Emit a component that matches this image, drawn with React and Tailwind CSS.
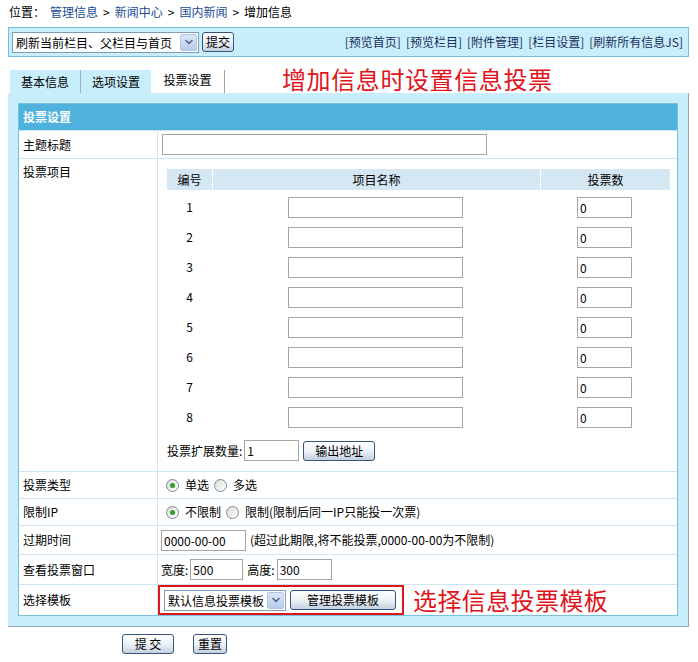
import { ChevronDown } from "lucide-react";

const FONT = { fontFamily: '"Noto Sans CJK SC", "Noto Sans", sans-serif' };

const ITEMS = [1, 2, 3, 4, 5, 6, 7, 8];

function TextBox({ value = "", className = "" }) {
  return (
    <input
      defaultValue={value}
      className={`h-[21px] border border-[#a5a5a5] bg-white px-[2px] text-[12px] leading-[19px] text-black outline-none ${className}`}
      style={FONT}
    />
  );
}

function Btn({ children, className = "" }) {
  return (
    <button
      className={`h-[20px] rounded-[3px] border border-[#34557c] bg-gradient-to-b from-white via-[#eef2f7] to-[#c3d0e0] text-[12px] leading-[18px] text-black ${className}`}
      style={FONT}
    >
      {children}
    </button>
  );
}

function Dropdown({ label, className = "" }) {
  return (
    <div className={`flex h-[21px] items-center border border-[#7f9db9] bg-white pl-[3px] ${className}`}>
      <span className="flex-1 truncate leading-[19px]">{label}</span>
      <span className="mr-[1px] flex h-[17px] w-[17px] items-center justify-center rounded-[2px] border border-[#b5c6e0] bg-gradient-to-b from-[#dbe6f7] to-[#b8cbeb]">
        <ChevronDown size={12} strokeWidth={3} className="text-[#4d6185]" />
      </span>
    </div>
  );
}

function Radio({ checked }) {
  return (
    <span className="flex h-[13px] w-[13px] items-center justify-center rounded-full border border-[#7b8aa0] bg-gradient-to-br from-[#dcdcd6] to-white">
      {checked && <span className="h-[5px] w-[5px] rounded-full bg-[#2aa12a]" />}
    </span>
  );
}

function Row({ label, h, top = false, children }) {
  return (
    <div className={`grid grid-cols-[139px_1fr] border-t border-[#cde6f1] ${h}`}>
      <div className={`flex border-r border-[#cde6f1] pl-[4px] ${top ? "items-start pt-[5px]" : "items-center"}`}>
        {label}
      </div>
      <div className="flex items-center">{children}</div>
    </div>
  );
}

export default function App() {
  return (
    <div className="h-[662px] w-[698px] bg-white text-[12px] leading-[16px] text-black" style={FONT}>
      {/* breadcrumb */}
      <div className="flex h-[24px] items-center pl-[9px]">
        <span>位置：</span>
        <a className="ml-[5px] text-[#1b4a94]">管理信息</a>
        <span className="mx-[5px]">&gt;</span>
        <a className="text-[#1b4a94]">新闻中心</a>
        <span className="mx-[5px]">&gt;</span>
        <a className="text-[#1b4a94]">国内新闻</a>
        <span className="mx-[5px]">&gt;</span>
        <span>增加信息</span>
      </div>

      {/* toolbar */}
      <div className="ml-[8px] mt-[3px] flex h-[30px] w-[681px] items-center justify-between border border-[#79bfdb] bg-[#c8eefc] pl-[3px] pr-[5px]">
        <div className="flex items-center gap-[3px]">
          <Dropdown label="刷新当前栏目、父栏目与首页" className="w-[187px]" />
          <Btn className="w-[32px]">提交</Btn>
        </div>
        <div className="flex gap-[5px] text-[#1a2f5a]">
          <span>[预览首页]</span>
          <span>[预览栏目]</span>
          <span>[附件管理]</span>
          <span>[栏目设置]</span>
          <span>[刷新所有信息JS]</span>
        </div>
      </div>

      {/* tabs */}
      <div className="ml-[10px] mt-[13px] flex h-[23px] items-start">
        <div className="flex h-[23px] w-[71px] items-center justify-center border-r border-[#9fb6c0] bg-[#c8eefc]">基本信息</div>
        <div className="flex h-[23px] w-[70px] items-center justify-center bg-[#c8eefc]">选项设置</div>
        <div className="flex h-[23px] w-[74px] items-start justify-center border-r border-[#9aa4a8] bg-white pt-[2px]">投票设置</div>
        <div className="ml-[57px] mt-[-5px] text-[24px] leading-[28px] tracking-[0.6px] text-[#e0141b]">增加信息时设置信息投票</div>
      </div>

      {/* main panel */}
      <div className="ml-[8px] w-[681px] border-b border-r border-[#8ea7b2] bg-[#c8eefc] px-[10px] py-[10px]">
        <div className="border border-[#79c0dc] bg-white">
          <div className="flex h-[26px] items-center bg-[#4eb2dd] pl-[4px] font-bold text-white">投票设置</div>

          <Row label="主题标题" h="h-[28px]">
            <TextBox className="ml-[4px] w-[325px]" />
          </Row>

          <Row label="投票项目" h="h-[313px]" top>
            <div className="flex h-full flex-col self-start pl-[9px] pt-[10px]">
              <div className="grid h-[21px] w-[501px] grid-cols-[45px_327px_129px] gap-x-[1px] text-center leading-[21px]">
                <div className="bg-[#d6e7f4]">编号</div>
                <div className="bg-[#d6e7f4]">项目名称</div>
                <div className="bg-[#d6e7f4]">投票数</div>
              </div>
              <div className="pt-[2px]">
                {ITEMS.map((n) => (
                  <div key={n} className="grid h-[30px] w-[501px] grid-cols-[45px_327px_129px] items-center">
                    <div className="text-center">{n}</div>
                    <div className="flex justify-center">
                      <TextBox className="w-[175px]" />
                    </div>
                    <div className="flex justify-center pl-[2px]">
                      <TextBox value="0" className="w-[55px]" />
                    </div>
                  </div>
                ))}
              </div>
              <div className="mt-[8px] flex items-center">
                <span>投票扩展数量:</span>
                <TextBox value="1" className="ml-[2px] w-[55px]" />
                <Btn className="ml-[4px] w-[72px]">输出地址</Btn>
              </div>
            </div>
          </Row>

          <Row label="投票类型" h="h-[27px]">
            <div className="flex items-center pl-[8px]">
              <Radio checked />
              <span className="ml-[6px]">单选</span>
              <span className="ml-[5px]">
                <Radio />
              </span>
              <span className="ml-[6px]">多选</span>
            </div>
          </Row>

          <Row label="限制IP" h="h-[27px]">
            <div className="flex items-center pl-[8px]">
              <Radio checked />
              <span className="ml-[6px]">不限制</span>
              <span className="ml-[5px]">
                <Radio />
              </span>
              <span className="ml-[6px]">限制(限制后同一IP只能投一次票)</span>
            </div>
          </Row>

          <Row label="过期时间" h="h-[29px]">
            <TextBox value="0000-00-00" className="ml-[3px] w-[85px]" />
            <span className="ml-[4px]">(超过此期限,将不能投票,0000-00-00为不限制)</span>
          </Row>

          <Row label="查看投票窗口" h="h-[30px]">
            <span className="ml-[3px]">宽度:</span>
            <TextBox value="500" className="ml-[2px] w-[53px]" />
            <span className="ml-[4px]">高度:</span>
            <TextBox value="300" className="ml-[2px] w-[55px]" />
          </Row>

          <Row label="选择模板" h="h-[31px]">
            <div className="flex h-[30px] w-[246px] items-center border-2 border-[#e0141b] pl-[4px]">
              <Dropdown label="默认信息投票模板" className="w-[122px]" />
              <Btn className="ml-[4px] w-[106px]">管理投票模板</Btn>
            </div>
            <span className="ml-[9px] text-[24px] leading-[28px] tracking-[0.4px] text-[#e0141b]">选择信息投票模板</span>
          </Row>
        </div>
      </div>

      {/* form actions */}
      <div className="mt-[7px] flex pl-[122px]">
        <Btn className="w-[52px]">提 交</Btn>
        <Btn className="ml-[19px] w-[34px]">重置</Btn>
      </div>
    </div>
  );
}
